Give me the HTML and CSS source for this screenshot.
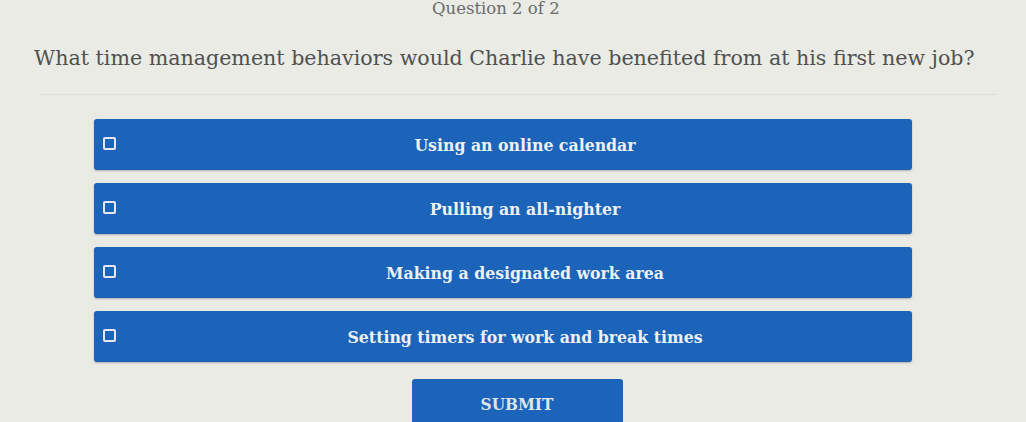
FILE: index.html
```html
<!DOCTYPE html>
<html lang="en">
<head>
<meta charset="utf-8">
<title>Question 2 of 2</title>
<link rel="stylesheet" href="styles.css">
</head>
<body>
<div class="page">
  <div class="counter">Question 2 of 2</div>
  <h1 class="question">What time management behaviors would Charlie have benefited from at his first new job?</h1>
  <div class="divider"></div>
  <div class="options">
    <label class="option"><span class="box"></span><span class="label">Using an online calendar</span></label>
    <label class="option"><span class="box"></span><span class="label">Pulling an all-nighter</span></label>
    <label class="option"><span class="box"></span><span class="label">Making a designated work area</span></label>
    <label class="option"><span class="box"></span><span class="label">Setting timers for work and break times</span></label>
  </div>
  <div class="actions">
    <button class="submit" type="button">SUBMIT</button>
  </div>
</div>
</body>
</html>
```
FILE: styles.css
```css
html, body {
  margin: 0;
  padding: 0;
  height: 100%;
  overflow: hidden;
}
body {
  background: #e9ebe4;
  font-family: "DejaVu Serif", "Liberation Serif", serif;
  color: #4e4f4e;
}
.page {
  display: flex;
  flex-direction: column;
}
.counter {
  padding-left: 432px;
  margin-top: 0;
  font-size: 16.5px;
  line-height: 18px;
  color: #6a6b6a;
}
.question {
  margin: 27px 0 0 34px;
  font-size: 20.6px;
  font-weight: normal;
  line-height: 26px;
  color: #505150;
  white-space: nowrap;
}
.divider {
  margin: 23px 30px 0 40px;
  height: 1px;
  background: #dcdfd7;
}
.options {
  display: flex;
  flex-direction: column;
  gap: 13px;
  margin: 24px 0 0 94px;
  width: 818px;
}
.option {
  position: relative;
  display: flex;
  align-items: center;
  justify-content: center;
  height: 51px;
  padding-left: 44px;
  background: #1b64b9;
  border-radius: 3px;
  box-shadow: 0 1px 2px rgba(0,0,0,0.25);
}
.box {
  position: absolute;
  left: 9px;
  top: 18px;
  width: 9px;
  height: 9px;
  border: 2px solid #e4e9f0;
  border-radius: 2px;
}
.label {
  font-family: "DejaVu Serif Condensed", "DejaVu Serif", serif;
  font-weight: bold;
  font-size: 17.5px;
  color: #eef1f5;
}
.actions {
  display: flex;
  justify-content: center;
  margin-top: 17px;
  padding-left: 8px;
}
.submit {
  width: 211px;
  height: 46px;
  border: none;
  border-radius: 3px;
  background: #1b64b9;
  color: #dfe4ea;
  font-family: "DejaVu Serif Condensed", "DejaVu Serif", serif;
  font-weight: bold;
  font-size: 17px;
  padding: 4px 0 0;
}
```
